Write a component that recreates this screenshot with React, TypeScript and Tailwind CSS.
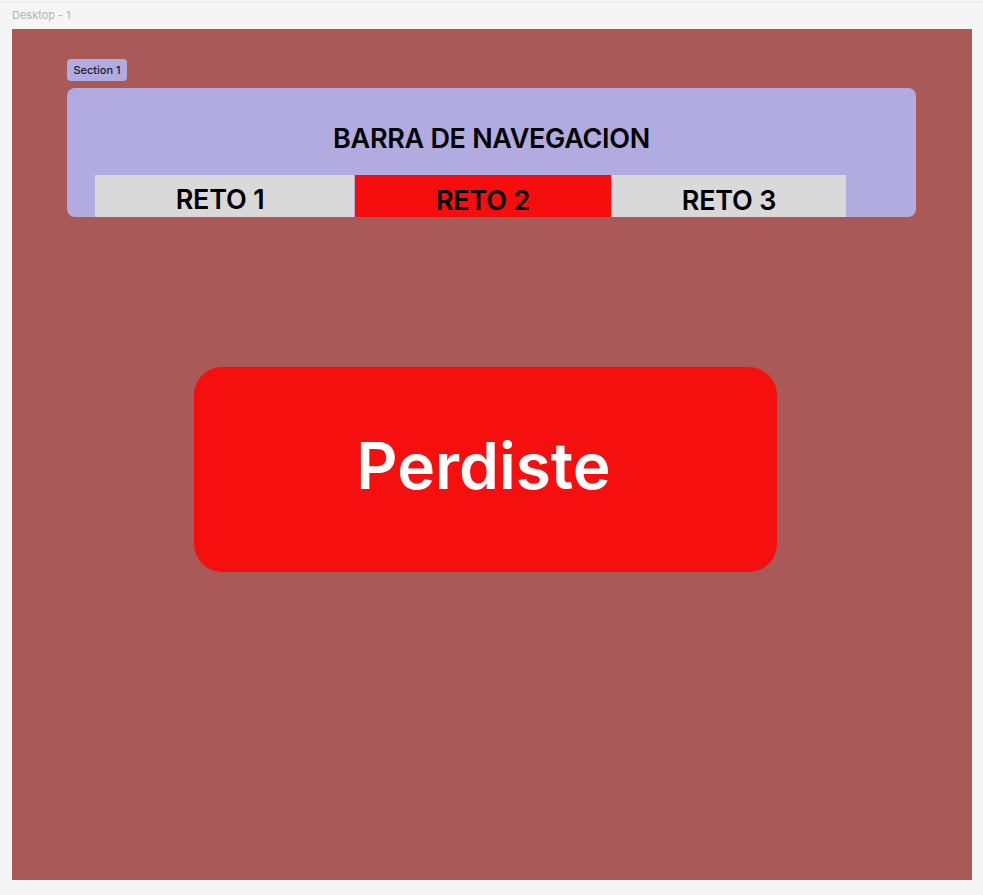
import React from "react";

export default function App() {
  return (
    <div className="w-[983px] h-[895px] bg-[#f5f5f5] overflow-hidden" style={{ fontFamily: "Inter, 'Noto Sans', sans-serif" }}>
      <div className="h-[3px] border-b border-[#e6e6e6]" />
      <div className="h-[26px] pl-[12px] pt-[5px] text-[11px] leading-[14px] text-[#b3b3b3]">Desktop - 1</div>
      <div className="ml-[12px] w-[960px] h-[851px] bg-[#a95a58] pt-[30px] pl-[55px]">
        <div className="w-[60px] h-[22px] rounded-[4px] bg-[#b2abdf] flex items-center justify-center text-[11px] text-[#1a1a2e] font-medium">Section 1</div>
        <div className="mt-[7px] w-[849px] h-[129px] rounded-[8px] bg-[#b2abdf] overflow-hidden flex flex-col">
          <div className="h-[87px] flex items-center justify-center pt-[15px] text-[27px] font-semibold tracking-[-0.3px] text-black">BARRA DE NAVEGACION</div>
          <div className="flex pl-[28px] h-[42px]">
            <div className="w-[259px] bg-[#d9d9d9] flex items-center justify-center text-[27px] font-semibold tracking-[-0.2px] text-black pt-[8px] pr-[9px]">RETO 1</div>
            <div className="ml-[1px] w-[256px] bg-[#f60e0e] flex items-center justify-center text-[27px] font-semibold tracking-[-0.2px] text-black pt-[10px]">RETO 2</div>
            <div className="ml-[1px] w-[234px] bg-[#d9d9d9] flex items-center justify-center text-[27px] font-semibold tracking-[-0.2px] text-black pt-[10px]">RETO 3</div>
          </div>
        </div>
        <div className="mt-[150px] ml-[127px] w-[583px] h-[205px] rounded-[28px] bg-[#f50f0f] flex items-center justify-center text-[64px] font-semibold text-white pb-[8px] pr-[4px]">Perdiste</div>
      </div>
    </div>
  );
}
